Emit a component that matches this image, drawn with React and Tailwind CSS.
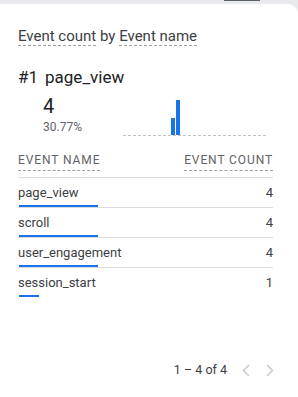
import React from 'react';

const rows = [
  { name: 'page_view', count: 4 },
  { name: 'scroll', count: 4 },
  { name: 'user_engagement', count: 4 },
  { name: 'session_start', count: 1 },
];

const max = 4;

const Dashed = ({ children, className = '' }) => (
  <span className={`border-b border-dashed border-[#9aa0a6] ${className}`}>{children}</span>
);

export default function App() {
  return (
    <div className="w-[298px] h-[397px] bg-[#e8eaed] overflow-hidden font-['Roboto',sans-serif]">
      <div className="relative h-[4px]">
        <div className="absolute left-[224px] top-0 w-[36px] h-[1px] bg-[#5f6368]" />
      </div>
      <div className="h-[393px] bg-white rounded-tr-[10px] flex flex-col pl-[18px] pr-[25px] text-[#202124]">
        <div className="pt-[23px] text-[15px] leading-[18px] text-[#3c4043]">
          <Dashed>Event count</Dashed> by <Dashed>Event name</Dashed>
        </div>

        <div className="mt-[21px] text-[17px] leading-[22px] flex gap-[7px]">
          <span>#1</span>
          <span>page_view</span>
        </div>

        <div className="flex mt-[6px]">
          <div className="pl-[25px] w-[105px]">
            <div className="text-[20px] leading-[24px]">4</div>
            <div className="text-[12px] leading-[14px] text-[#5f6368] mt-[2px]">30.77%</div>
          </div>
          <div className="relative w-[143px] h-[42px]">
            <div className="absolute left-0 right-0 bottom-0 border-b border-dashed border-[#bdc1c6]" />
            <div className="absolute left-[48px] bottom-[1px] w-[4px] h-[17px] bg-[#1a73e8]" />
            <div className="absolute left-[53px] bottom-[1px] w-[4px] h-[35px] bg-[#1a73e8]" />
          </div>
        </div>

        <div className="mt-[16px] flex justify-between text-[12px] leading-[16px] tracking-[0.9px] text-[#5f6368] pb-[6px] border-b border-[#dadce0]">
          <span className="border-b border-dashed border-[#9aa0a6] pb-[2px]">EVENT NAME</span>
          <span className="border-b border-dashed border-[#9aa0a6] pb-[2px]">EVENT COUNT</span>
        </div>

        {rows.map((r, i) => (
          <div key={r.name} className={`pt-[6px] ${i < rows.length - 1 ? 'border-b border-[#dadce0]' : ''}`}>
            <div className="flex justify-between text-[13px] leading-[18px] text-[#3c4043]">
              <span>{r.name}</span>
              <span>{r.count}</span>
            </div>
            <div className="mt-[3px] h-[2px] bg-[#1a73e8] ml-[1px]" style={{ width: `${(r.count / max) * 79}px` }} />
          </div>
        ))}

        <div className="mt-auto mb-[19px] flex items-center justify-end text-[12.5px] leading-[16px] text-[#3c4043]">
          <span>1 – 4 of 4</span>
          <svg width="8" height="13" viewBox="0 0 8 13" fill="none" stroke="#c8cacd" strokeWidth="1.5" className="ml-[15px]"><path d="M7 1L1.5 6.5 7 12" /></svg>
          <svg width="8" height="13" viewBox="0 0 8 13" fill="none" stroke="#c8cacd" strokeWidth="1.5" className="ml-[16px] mr-[-1px]"><path d="M1 1l5.5 5.5L1 12" /></svg>
        </div>
      </div>
    </div>
  );
}
